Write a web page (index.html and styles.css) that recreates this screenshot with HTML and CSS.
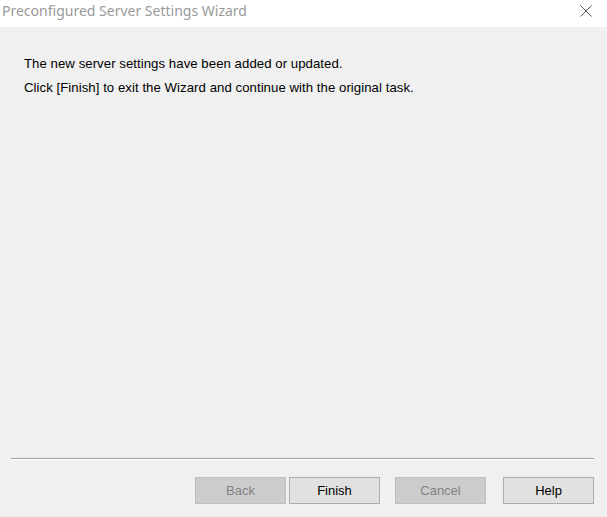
FILE: index.html
```html
<!DOCTYPE html>
<html>
<head>
<meta charset="utf-8">
<link rel="stylesheet" href="styles.css">
</head>
<body>
<div class="window">
  <div class="titlebar">
    <span class="title">Preconfigured Server Settings Wizard</span>
    <svg class="close" width="12" height="12" viewBox="0 0 12 12"><path d="M0.5 0.5 L11.5 11.5 M11.5 0.5 L0.5 11.5" stroke="#555" stroke-width="1" fill="none"/></svg>
  </div>
  <div class="content">
    <p class="msg">The new server settings have been added or updated.</p>
    <p class="msg">Click [Finish] to exit the Wizard and continue with the original task.</p>
  </div>
  <div class="footer">
    <div class="separator"></div>
    <div class="buttons">
      <button class="btn btn-back" disabled>Back</button>
      <button class="btn btn-finish">Finish</button>
      <button class="btn btn-cancel" disabled>Cancel</button>
      <button class="btn btn-help">Help</button>
    </div>
  </div>
</div>
</body>
</html>
```
FILE: styles.css
```css
html, body {
  margin: 0;
  padding: 0;
}
body {
  width: 607px;
  height: 517px;
  overflow: hidden;
  font-family: "Liberation Sans", Arial, sans-serif;
}
.window {
  width: 607px;
  height: 517px;
  display: flex;
  flex-direction: column;
  background: #f0f0f0;
}
.titlebar {
  height: 27px;
  background: #ffffff;
  display: flex;
  align-items: flex-start;
  justify-content: space-between;
  flex-shrink: 0;
}
.title {
  font-family: "Noto Sans", "Open Sans", sans-serif;
  font-size: 14px;
  line-height: 20px;
  color: #9a9a9a;
  padding-left: 2px;
  padding-top: 1px;
}
.close {
  margin-top: 5px;
  margin-right: 15px;
}
.content {
  flex: 1;
  padding: 25px 0 0 24px;
}
.msg {
  margin: 0;
  font-size: 13.2px;
  line-height: 24px;
  letter-spacing: 0.05px;
  color: #000;
}
.footer {
  flex-shrink: 0;
}
.separator {
  margin: 0 13px 0 11px;
  height: 1px;
  background: #a0a0a0;
  border-bottom: 1px solid #ffffff;
}
.buttons {
  display: flex;
  justify-content: flex-end;
  padding: 17px 13px 13px 0;
}
.btn {
  width: 91px;
  height: 27px;
  box-sizing: border-box;
  border: 1px solid #adadad;
  background: #e1e1e1;
  color: #000;
  font-family: "Liberation Sans", Arial, sans-serif;
  font-size: 13px;
  padding: 0;
  border-radius: 0;
}
.btn[disabled] {
  background: #cccccc;
  border-color: #bfbfbf;
  color: #838383;
}
.btn-finish { margin-left: 3px; }
.btn-cancel { margin-left: 15px; }
.btn-help { margin-left: 17px; }
```
